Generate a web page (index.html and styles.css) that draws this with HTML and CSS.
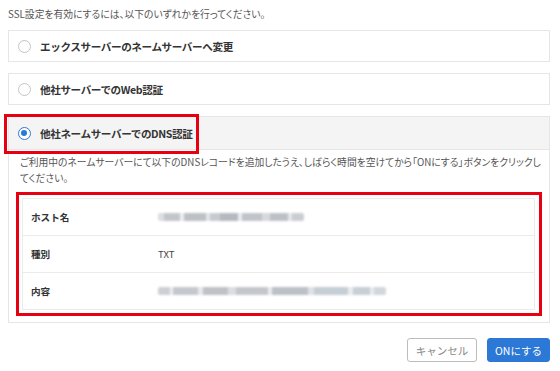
FILE: index.html
```html
<!DOCTYPE html>
<html lang="ja">
<head>
<meta charset="utf-8">
<link rel="stylesheet" href="styles.css">
</head>
<body>
<div class="page">
  <p class="intro">SSL設定を有効にするには、以下のいずれかを行ってください。</p>
  <div class="option">
    <span class="radio"></span>
    <span class="label">エックスサーバーのネームサーバーへ変更</span>
  </div>
  <div class="option">
    <span class="radio"></span>
    <span class="label">他社サーバーでのWeb認証</span>
  </div>
  <div class="option-open">
    <div class="open-head">
      <span class="radio checked"></span>
      <span class="label">他社ネームサーバーでのDNS認証</span>
      <span class="mark mark-head"></span>
    </div>
    <div class="open-body">
      <p class="desc">ご利用中のネームサーバーにて以下のDNSレコードを追加したうえ、しばらく時間を空けてから「ONにする」ボタンをクリックしてください。</p>
      <div class="mark-table">
        <div class="table">
          <div class="row"><span class="key">ホスト名</span><span class="blur blur-host"></span></div>
          <div class="row"><span class="key">種別</span><span class="val">TXT</span></div>
          <div class="row"><span class="key">内容</span><span class="blur blur-content"></span></div>
        </div>
      </div>
    </div>
  </div>
  <div class="actions">
    <button class="btn cancel">キャンセル</button>
    <button class="btn on">ONにする</button>
  </div>
</div>
</body>
</html>
```
FILE: styles.css
```css
* { box-sizing: border-box; }
html, body { margin: 0; padding: 0; background: #fff; }
body {
  font-family: "Noto Sans CJK JP", "Noto Sans", sans-serif;
  color: #333;
  width: 560px;
  height: 371px;
  overflow: hidden;
}
.page { padding: 6px 10px 0 8px; position: relative; }
.intro {
  margin: 0;
  font-size: 9.8px;
  line-height: 16px;
  font-feature-settings: "palt";
  color: #555;
  height: 24px;
}
.option {
  height: 32px;
  border: 1px solid #e6e6e6;
  display: flex;
  align-items: center;
  padding-left: 9px;
  margin-bottom: 11px;
}
.radio {
  width: 13px;
  height: 13px;
  border: 1px solid #c4c4c4;
  border-radius: 50%;
  background: #fff;
  flex: none;
  margin-right: 9px;
}
.radio.checked {
  border: 1.5px solid #2b78d6;
  position: relative;
}
.radio.checked::after {
  content: "";
  position: absolute;
  left: 2px; top: 2px;
  width: 6px; height: 6px;
  border-radius: 50%;
  background: #2b78d6;
}
.label {
  font-size: 10.6px;
  font-weight: 700;
  color: #333;
  letter-spacing: -0.4px;
}
.option-open {
  border: 1px solid #e6e6e6;
  margin-top: 10px;
}
.open-head {
  height: 33px;
  background: #f4f4f4;
  border-bottom: 1px solid #e6e6e6;
  display: flex;
  align-items: center;
  padding-left: 9px;
  position: relative;
}
.mark {
  position: absolute;
  border: 3px solid #e60012;
  pointer-events: none;
}
.mark-head {
  left: -5px;
  top: -3px;
  width: 195px;
  height: 40px;
}
.open-body { padding: 4px 7px 6px 7px; }
.desc {
  margin: 0 0 0 4px;
  font-size: 9.8px;
  line-height: 16px;
  font-feature-settings: "palt";
  color: #555;
}
.mark-table {
  margin-top: 6px;
  border: 3px solid #e60012;
  padding: 3px 4px 3px 3px;
}
.table { border: 1px solid #ebebeb; }
.row {
  height: 37px;
  display: flex;
  align-items: center;
  padding-left: 8px;
  border-bottom: 1px solid #ebebeb;
}
.row:last-child { border-bottom: none; height: 36px; }
.key {
  width: 127px;
  font-size: 9.6px;
  font-weight: 700;
  color: #333;
}
.val { font-size: 9.6px; color: #444; }
.blur {
  height: 8px;
  filter: blur(1.3px);
  opacity: 0.65;
  border-radius: 2px;
}
.blur-host {
  width: 146px;
  background: linear-gradient(90deg, #c9ccd1 0 6px, #a3a8b0 6px 22px, #e4e6e9 22px 26px, #9aa0a8 26px 48px, #d5d8dc 48px 52px, #aab0b8 52px 62px, #8f96a0 62px 80px, #e0e2e5 80px 84px, #a0a6ae 84px 104px, #c2c6cc 104px 112px, #9ba1a9 112px 130px, #d7dade 130px 134px, #aeb3ba 134px 146px);
}
.blur-content {
  width: 228px;
  background: linear-gradient(90deg, #b2b7bf 0 12px, #e3e5e8 12px 15px, #a6acb4 15px 40px, #dadde1 40px 45px, #9ca2aa 45px 70px, #c8ccd1 70px 78px, #a4aab2 78px 110px, #e0e3e6 110px 114px, #98a0aa 114px 150px, #cfd3d8 150px 156px, #a9b4c0 156px 190px, #dfe2e5 190px 195px, #aab6c2 195px 212px, #dde0e4 212px 216px, #b8c3cc 216px 228px);
}
.actions {
  display: flex;
  justify-content: flex-end;
  gap: 10px;
  margin-top: 15px;
}
.btn {
  height: 24px;
  border-radius: 3px;
  font-family: inherit;
  font-size: 10.5px;
  padding: 0;
  cursor: pointer;
}
.cancel {
  width: 70px;
  border: 1px solid #bcbcbc;
  background: #fff;
  color: #888;
}
.on {
  width: 63px;
  border: 1px solid #2b78d6;
  background: #2b78d6;
  color: #fff;
}
```
